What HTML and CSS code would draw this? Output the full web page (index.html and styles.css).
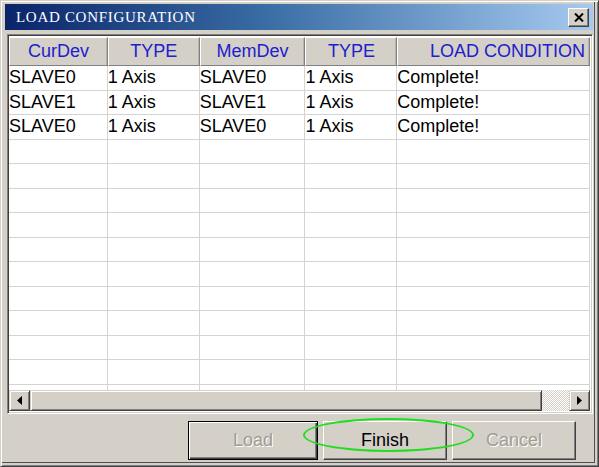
FILE: index.html
```
<!DOCTYPE html>
<html>
<head>
<meta charset="utf-8">
<link rel="stylesheet" href="styles.css">
</head>
<body>
<div class="window">
  <div class="titlebar">
    <span class="title">LOAD CONFIGURATION</span>
    <span class="close">
      <svg width="10" height="9" viewBox="0 0 10 9"><path d="M1 0.5 L9 8.5 M9 0.5 L1 8.5" stroke="#000" stroke-width="2"/></svg>
    </span>
  </div>
  <div class="grid">
    <div class="head">
      <div class="hc c1">CurDev</div>
      <div class="hc c2">TYPE</div>
      <div class="hc c3">MemDev</div>
      <div class="hc c4">TYPE</div>
      <div class="hc c5 right">LOAD CONDITION</div>
    </div>
    <div class="body">
      <div class="row"><div class="c c1">SLAVE0</div><div class="c c2">1 Axis</div><div class="c c3">SLAVE0</div><div class="c c4">1 Axis</div><div class="c c5">Complete!</div></div>
      <div class="row"><div class="c c1">SLAVE1</div><div class="c c2">1 Axis</div><div class="c c3">SLAVE1</div><div class="c c4">1 Axis</div><div class="c c5">Complete!</div></div>
      <div class="row"><div class="c c1">SLAVE0</div><div class="c c2">1 Axis</div><div class="c c3">SLAVE0</div><div class="c c4">1 Axis</div><div class="c c5">Complete!</div></div>
      <div class="row"><div class="c c1"></div><div class="c c2"></div><div class="c c3"></div><div class="c c4"></div><div class="c c5"></div></div>
      <div class="row"><div class="c c1"></div><div class="c c2"></div><div class="c c3"></div><div class="c c4"></div><div class="c c5"></div></div>
      <div class="row"><div class="c c1"></div><div class="c c2"></div><div class="c c3"></div><div class="c c4"></div><div class="c c5"></div></div>
      <div class="row"><div class="c c1"></div><div class="c c2"></div><div class="c c3"></div><div class="c c4"></div><div class="c c5"></div></div>
      <div class="row"><div class="c c1"></div><div class="c c2"></div><div class="c c3"></div><div class="c c4"></div><div class="c c5"></div></div>
      <div class="row"><div class="c c1"></div><div class="c c2"></div><div class="c c3"></div><div class="c c4"></div><div class="c c5"></div></div>
      <div class="row"><div class="c c1"></div><div class="c c2"></div><div class="c c3"></div><div class="c c4"></div><div class="c c5"></div></div>
      <div class="row"><div class="c c1"></div><div class="c c2"></div><div class="c c3"></div><div class="c c4"></div><div class="c c5"></div></div>
      <div class="row"><div class="c c1"></div><div class="c c2"></div><div class="c c3"></div><div class="c c4"></div><div class="c c5"></div></div>
      <div class="row"><div class="c c1"></div><div class="c c2"></div><div class="c c3"></div><div class="c c4"></div><div class="c c5"></div></div>
      <div class="row"><div class="c c1"></div><div class="c c2"></div><div class="c c3"></div><div class="c c4"></div><div class="c c5"></div></div>
    </div>
    <div class="hscroll">
      <div class="sbtn"><svg width="5" height="9" viewBox="0 0 5 9"><path d="M5 0 L0 4.5 L5 9 Z" fill="#000"/></svg></div>
      <div class="track"></div>
      <div class="thumbzone"></div>
      <div class="sbtn"><svg width="5" height="9" viewBox="0 0 5 9"><path d="M0 0 L5 4.5 L0 9 Z" fill="#000"/></svg></div>
    </div>
  </div>
  <div class="buttons">
    <div class="btn default disabled">Load</div>
    <div class="btn finish">Finish<span class="ellipse"></span></div>
    <div class="btn disabled">Cancel</div>
  </div>
</div>
</body>
</html>
```
FILE: styles.css
```
* { box-sizing: border-box; }
html, body { margin: 0; padding: 0; }
body {
  width: 599px;
  height: 467px;
  background: #d4d0c8;
  font-family: "Liberation Sans", Arial, sans-serif;
  overflow: hidden;
}
.window {
  width: 599px;
  height: 467px;
  background: #d4d0c8;
  border-top: 1px solid #d4d0c8;
  border-left: 1px solid #d4d0c8;
  border-right: 1px solid #404040;
  border-bottom: 1px solid #404040;
  box-shadow: inset 1px 1px 0 #ffffff, inset -1px -1px 0 #808080, inset -3px -3px 0 #d4d0c8, inset -4px -4px 0 #505050;
  padding: 3px 5px 0 4px;
  display: flex;
  flex-direction: column;
}
.titlebar {
  height: 26px;
  background: linear-gradient(to right, #0a246a 0%, #3a6ea5 45%, #a6caf0 100%);
  display: flex;
  align-items: center;
  justify-content: space-between;
  padding: 0 4px 0 11px;
}
.title {
  font-family: "Liberation Serif", "Times New Roman", serif;
  color: #ffffff;
  font-size: 15px;
  letter-spacing: 0.7px;
  padding-top: 1px;
}
.close {
  width: 21px;
  height: 19px;
  background: #d4d0c8;
  border-top: 1px solid #ffffff;
  border-left: 1px solid #ffffff;
  border-right: 1px solid #404040;
  border-bottom: 1px solid #404040;
  box-shadow: inset -1px -1px 0 #808080;
  display: flex;
  align-items: center;
  justify-content: center;
}
.grid {
  margin-top: 4px;
  margin-left: 2px;
  width: 586px;
  height: 380px;
  border-top: 1px solid #808080;
  border-left: 1px solid #808080;
  border-right: 1px solid #ffffff;
  border-bottom: 1px solid #ffffff;
  box-shadow: inset 1px 1px 0 #404040, inset -1px -1px 0 #d4d0c8;
  padding: 2px 2px 2px 1px;
  display: flex;
  flex-direction: column;
  background: #ffffff;
}
.head, .row { display: flex; }
.c1 { width: 99px; }
.c2 { width: 92px; }
.c3 { width: 106px; }
.c4 { width: 92px; }
.c5 { width: 193px; }
.hc {
  height: 29px;
  background: #d4d0c8;
  color: #2020cc;
  font-size: 18px;
  display: flex;
  align-items: center;
  justify-content: center;
  border-left: 1px solid #ffffff;
  border-top: 1px solid #ffffff;
  border-right: 1px solid #808080;
  border-bottom: 1px solid #808080;
  box-shadow: inset -1px 0 0 #b8b4ac;
}
.hc.right { justify-content: flex-end; padding-right: 4px; }
.body {
  flex: 1;
  overflow: hidden;
  background: #ffffff;
}
.row { height: 24.5px; }
.c {
  height: 100%;
  border-right: 1px solid #d4d4d4;
  border-bottom: 1px solid #d4d4d4;
  font-size: 18px;
  color: #000;
  padding-left: 0;
  line-height: 22px;
  white-space: nowrap;
}
.hscroll {
  height: 21px;
  display: flex;
  background: #d4d0c8;
}
.sbtn {
  width: 21px;
  height: 21px;
  background: #d4d0c8;
  border-top: 1px solid #d4d0c8;
  border-left: 1px solid #d4d0c8;
  border-right: 1px solid #404040;
  border-bottom: 1px solid #404040;
  box-shadow: inset 1px 1px 0 #ffffff, inset -1px -1px 0 #808080;
  display: flex;
  align-items: center;
  justify-content: center;
}
.track {
  flex: 1;
  background: #d4d0c8;
  border-top: 1px solid #d4d0c8;
  border-left: 1px solid #d4d0c8;
  border-right: 1px solid #404040;
  border-bottom: 1px solid #404040;
  box-shadow: inset 1px 1px 0 #ffffff, inset -1px -1px 0 #808080;
}
.thumbzone {
  width: 27px;
  background-color: #eeede9;
  background-image: repeating-conic-gradient(#d4d0c8 0 25%, #ffffff 0 50%);
  background-size: 2px 2px;
}
.buttons {
  display: flex;
  justify-content: flex-end;
  gap: 5px;
  padding: 7px 17px 0 0;
}
.btn {
  position: relative;
  width: 124px;
  height: 39px;
  background: #d4d0c8;
  border-top: 1px solid #ffffff;
  border-left: 1px solid #ffffff;
  border-right: 1px solid #404040;
  border-bottom: 1px solid #404040;
  box-shadow: inset -1px -1px 0 #808080;
  display: flex;
  align-items: center;
  justify-content: center;
  font-size: 18px;
  color: #000;
}
.btn.default {
  width: 130px;
  border: 1px solid #000;
  box-shadow: inset 1px 1px 0 #ffffff, inset -1px -1px 0 #404040, inset -2px -2px 0 #808080;
}
.btn.disabled {
  color: #a09c94;
  text-shadow: 1px 1px 0 #ffffff;
}
.btn.finish { z-index: 2; }
.ellipse {
  position: absolute;
  left: -21px;
  top: -4px;
  width: 171px;
  height: 34px;
  border: 2px solid #22dd22;
  border-radius: 50%;
  pointer-events: none;
  z-index: 5;
}
```
